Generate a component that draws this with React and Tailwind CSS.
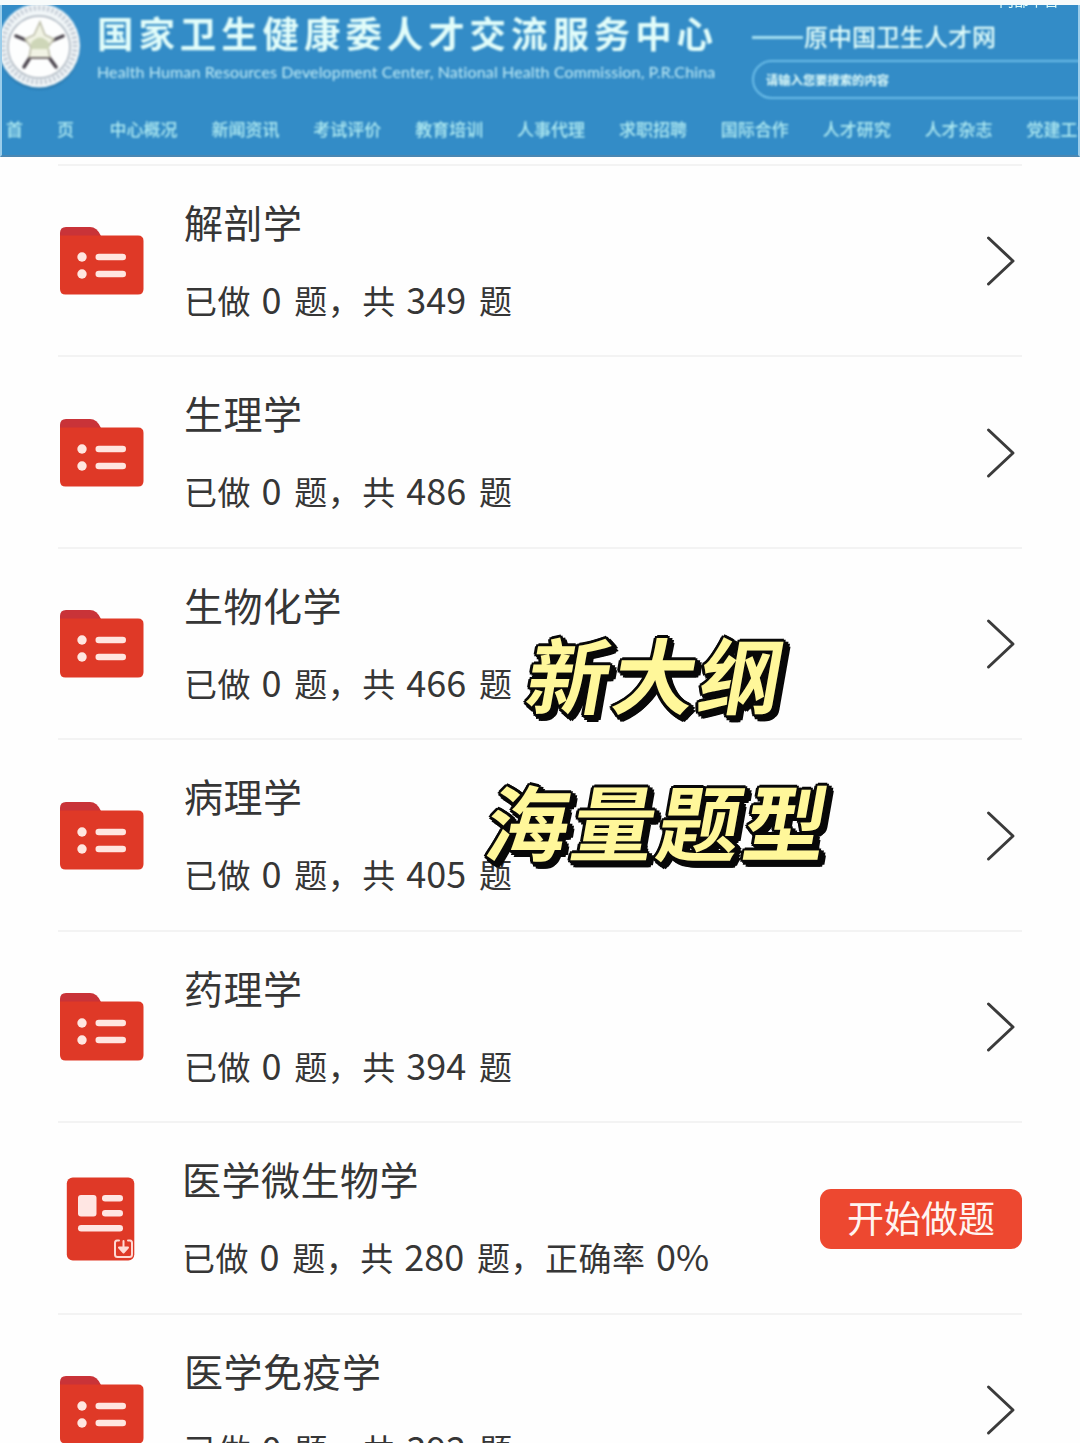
import React from "react";

const navItems = [
    "中心概况",
    "新闻资讯",
    "考试评价",
    "教育培训",
    "人事代理",
    "求职招聘",
    "国际合作",
    "人才研究",
    "人才杂志",
    "党建工作",
];

const subjects = [
    { name: "解剖学", done: 0, total: 349 },
    { name: "生理学", done: 0, total: 486 },
    { name: "生物化学", done: 0, total: 466 },
    { name: "病理学", done: 0, total: 405 },
    { name: "药理学", done: 0, total: 394 },
    { name: "医学微生物学", done: 0, total: 280, rate: "0%" },
    { name: "医学免疫学", done: 0, total: 392 },
];

const Logo = () => (
    <svg className="-ml-[4px] h-[92px] w-[86px] shrink-0" viewBox="-2 0 86 92">
        <ellipse cx="39" cy="48" rx="41" ry="42" fill="#1f6c9f" opacity="0.55" />
        <ellipse cx="39" cy="45.5" rx="41" ry="42" fill="#f1f6f8" />
        <ellipse cx="39" cy="45" rx="36" ry="37" fill="none" stroke="#8c98ac" strokeWidth="5" strokeDasharray="2 2.5" opacity="0.5" />
        <circle cx="39" cy="47" r="31" fill="#fdfefe" stroke="#a9b3bd" strokeWidth="1.5" />
        {/* five arms and the dome in the middle */}
        <g stroke="#4d4750" strokeWidth="3.5" strokeLinecap="round">
            <path d="M16 36 28 41M63 36 51 41" />
            <path d="M24 67 31 56M56 67 48 56" />
        </g>
        <path d="M40 22 45 35 54 39 48 47 50 58H29L31 47 25 39 34 35Z" fill="#f1f3e4" stroke="#b9baa5" strokeWidth="1.5" />
        <path d="M31 43Q40 32 49 43V49H31Z" fill="#ced6b8" />
        <path d="M28 58H51" stroke="#77716f" strokeWidth="2" />
    </svg>
);

const Header = () => (
    <header className="h-[157px] overflow-hidden bg-[#f7fbfb] pt-[5px]">
        <div className="relative h-[152px] overflow-hidden border-x-2 border-b-2 border-b-[#4b87b2] border-x-[#9bcdea] bg-[#338cc7] text-[#e2fdfa]">
            <div className="flex h-[105px] blur-[0.8px]">
                <div className="-mt-[5px] w-[95px] shrink-0">
                    <Logo />
                </div>
                <div className="w-[655px] shrink-0 whitespace-nowrap">
                    <h1 className="mt-[3px] text-[36.5px] leading-[50px] font-bold tracking-[4.9px]">国家卫生健康委人才交流服务中心</h1>
                    <p className="mt-[3px] font-[Lato,sans-serif] text-[16px] leading-[22px] tracking-[0.13px] text-[#c0ecf6]">
                        Health Human Resources Development Center, National Health Commission, P.R.China
                    </p>
                </div>
                <div className="w-[360px] shrink-0 whitespace-nowrap">
                    <div className="mt-[15px] flex h-[34px] items-center text-[24px] font-medium">
                        <span className="mr-[1px] h-[3px] w-[51px] bg-[#a5def0]" />
                        <span className="-mt-[3px]">原中国卫生人才网</span>
                    </div>
                    <div className="mt-[6px] flex h-[39px] items-center rounded-full border-2 border-[#6cbde8] pt-[1px] pl-[12px] text-[12.3px] font-bold">
                        请输入您要搜索的内容
                    </div>
                </div>
            </div>
            <nav className="flex h-[38px] items-center text-[17px] font-medium whitespace-nowrap text-[#b2ecf2] blur-[0.8px]">
                <span className="flex w-[107.5px] shrink-0 gap-[34px] pl-[4px]">
                    <span>首</span>
                    <span>页</span>
                </span>
                {navItems.map((item) => (
                    <span key={item} className="w-[101.9px] shrink-0">{item}</span>
                ))}
            </nav>
            <span className="absolute -top-[13px] left-[997px] text-[15px] leading-[16px] blur-[0.7px]">内部平台</span>
        </div>
    </header>
);

const FolderIcon = () => (
    <svg className="mt-[2px] ml-[1px] h-[70px] w-[86px]" viewBox="0 0 86 70">
        <path d="M1 12V7Q1 1 7 1H31Q38 1 42 10V20H1Z" fill="#c93338" />
        <path d="M1 9.500H79Q84.500 9.500 84.500 15V63Q84.500 68.500 79 68.500H6.500Q1 68.500 1 63Z" fill="#df3927" />
        <g fill="#ffe6e0">
            <circle cx="23" cy="31" r="4.700" />
            <circle cx="23" cy="48" r="4.700" />
            <rect x="36.500" y="27.700" width="30.500" height="6.600" rx="3.300" />
            <rect x="36.500" y="44.700" width="30.500" height="6.600" rx="3.300" />
        </g>
    </svg>
);

const PaperIcon = () => (
    <svg className="mt-[2px] ml-[7.5px] h-[86px] w-[70px]" viewBox="0 0 70 86">
        <rect x="0.800" y="1.500" width="67.500" height="83" rx="6" fill="#df3927" />
        <g fill="#ffe6e3">
            <rect x="12" y="19" width="18.500" height="21.500" rx="3" />
            <rect x="36" y="19" width="21" height="6.500" rx="3.200" />
            <rect x="36" y="34" width="21" height="6.500" rx="3.200" />
            <rect x="12" y="49" width="45" height="6.500" rx="3.200" />
        </g>
        <g fill="none" stroke="#ffd9d3" strokeWidth="2" strokeLinecap="round" strokeLinejoin="round">
            <path d="M53 64.500H51Q49 64.500 49 67V78.500Q49 81 51.500 81H63.500Q66 81 66 78.500V67Q66 64.500 64 64.500H62" />
            <path d="M57.500 65V74" />
            <path d="M53 71.500H62L57.500 76.500Z" fill="#ffd9d3" />
        </g>
    </svg>
);

const ChevronIcon = () => (
    <svg className="mt-[2px] mr-[6px] h-[52px] w-[30px]" viewBox="0 0 30 52" fill="none" stroke="#3b3b3b" strokeWidth="3" strokeLinecap="round" strokeLinejoin="round">
        <path d="M2.500 3 27 26 2.500 49" />
    </svg>
);

const Count = ({ children }) => <span className="mr-[5px] ml-[2.500px] text-[36px] leading-none tracking-[0px]">{children}</span>;

const SubjectRow = ({ subject }) => (
    <li className="flex h-[191.5px] shrink-0 items-center border-t-2 border-[#f3f3f3]">
        <div className={subject.rate ? "w-[124px] shrink-0" : "w-[126px] shrink-0"}>{subject.rate ? <PaperIcon /> : <FolderIcon />}</div>
        <div className="flex-1 self-start whitespace-nowrap">
            <h2 className="mt-[26px] text-[39px] leading-[58px] tracking-[0.5px]">{subject.name}</h2>
            <p className="mt-[25px] text-[33px] leading-[50px] tracking-[0.5px]">
                已做 <Count>{subject.done}</Count> 题，<span className="ml-[1px]">共</span> <Count>{subject.total}</Count> 题
                {subject.rate && (
                    <>
                        ，<span className="ml-[1px]">正确率</span> <Count>{subject.rate}</Count>
                    </>
                )}
            </p>
        </div>
        {subject.rate ? (
            <button className="mt-[2px] h-[60px] w-[202px] rounded-[11px] bg-[#ed4830] pb-[4px] text-[37px] leading-[56px] text-[#fff4f0]">开始做题</button>
        ) : (
            <ChevronIcon />
        )}
    </li>
);

const Sticker = ({ className, children }) => (
    <div
        className={
            "absolute -skew-x-[10deg] text-[82.5px] leading-[100px] font-bold tracking-[3.500px] whitespace-nowrap text-[#fff79a] [text-shadow:3px_0_0_#080808,-3px_0_0_#080808,0_3px_0_#080808,0_-3px_0_#080808,2px_2px_0_#080808,-2px_2px_0_#080808,2px_-2px_0_#080808,-2px_-2px_0_#080808,5px_0_0_#080808,7px_2px_0_#080808,8px_5px_0_#080808,6px_7px_0_#080808,4px_7px_0_#080808,1px_5px_0_#080808] " +
            className
        }
    >
        {children}
    </div>
);

export default function App() {
    return (
        <div className="relative h-[1443px] w-[1080px] overflow-hidden bg-[#fefefe] font-['Noto_Sans_CJK_SC',sans-serif] text-[#363636]">
            <Header />
            <ul className="mt-[6.500px] ml-[58px] flex w-[964px] flex-col">
                {subjects.map((subject) => (
                    <SubjectRow key={subject.name} subject={subject} />
                ))}
            </ul>
            <Sticker className="top-[622px] left-[529px]">新大纲</Sticker>
            <Sticker className="top-[769px] left-[488px]">海量题型</Sticker>
        </div>
    );
}
